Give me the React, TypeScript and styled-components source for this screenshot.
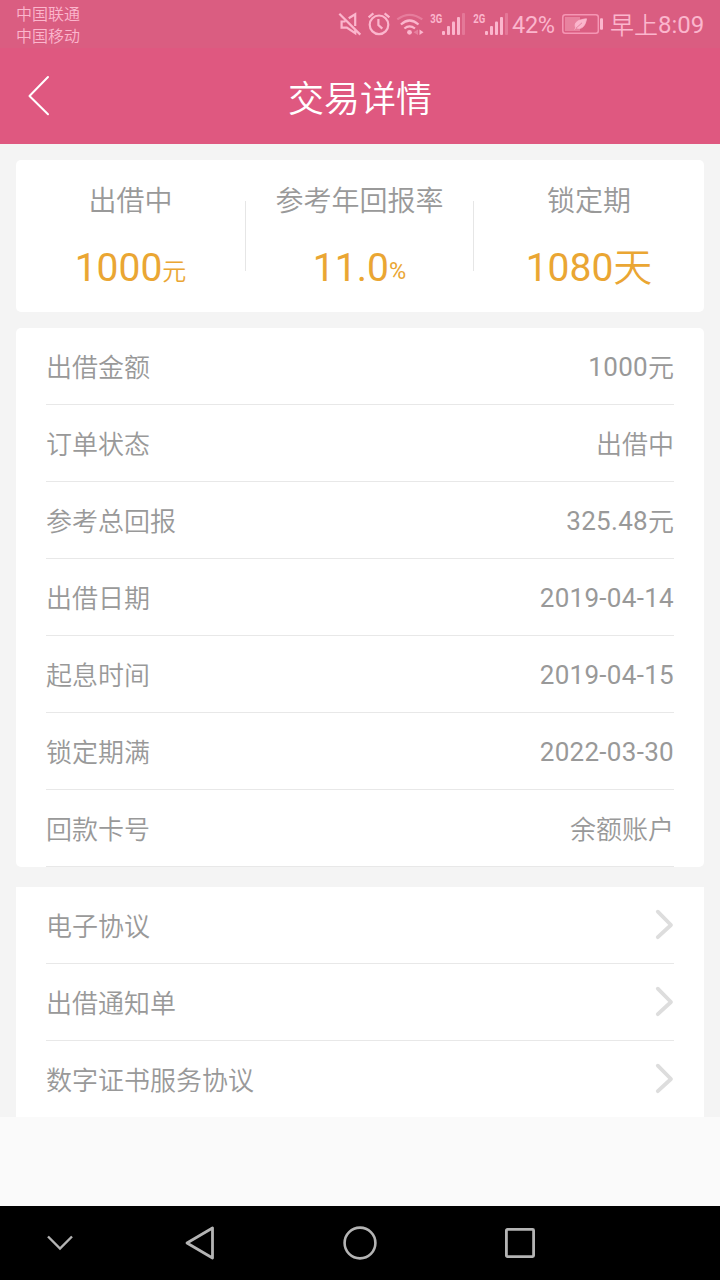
import React from "react";
import styled, { createGlobalStyle } from "styled-components";

const GlobalStyle = createGlobalStyle`
  * { box-sizing: border-box; }
  body {
    margin: 0;
    background: #fafafa;
    font-family: Roboto, "Noto Sans CJK SC", sans-serif;
    font-weight: 350;
    -webkit-font-smoothing: antialiased;
  }
  svg { display: block; flex: none; }
`;

const Screen = styled.div`
  width: 720px;
  height: 1280px;
  display: flex;
  flex-direction: column;
  background: #fafafa;
  overflow: hidden;
`;

const StatusBar = styled.div`
  height: 48px;
  flex: none;
  display: flex;
  justify-content: space-between;
  padding: 0 16px;
  background: #da5d81;
  color: #fbb6cd;
`;

const Carriers = styled.div`
  padding-top: 4px;
  font-size: 16px;
  line-height: 22px;
`;

const StatusItems = styled.div`
  display: flex;
  align-items: center;
`;

const StatusText = styled.span<{ $width: number; $size: number; $pull?: number }>`
  width: ${(p) => p.$width}px;
  margin-left: ${(p) => -(p.$pull ?? 0)}px;
  font-size: ${(p) => p.$size}px;
  line-height: 48px;
  white-space: nowrap;
  padding-top: 1px;
`;

const Header = styled.header`
  height: 96px;
  flex: none;
  display: grid;
  grid-template-columns: 80px 1fr 80px;
  align-items: center;
  background: #df5880;
  color: #fff;
`;

const Title = styled.h1`
  margin: 0;
  padding-top: 7px;
  font-size: 36px;
  line-height: 50px;
  font-weight: 350;
  text-align: center;
`;

const Content = styled.main`
  flex: none;
  display: flex;
  flex-direction: column;
  padding: 16px 16px 0;
  background: #f4f4f4;
`;

const Summary = styled.section`
  height: 152px;
  display: flex;
  margin-bottom: 16px;
  border-radius: 5px;
  background: #fff;
`;

const SummaryCell = styled.div<{ $width: number }>`
  width: ${(p) => p.$width}px;
  display: flex;
  flex-direction: column;
  align-items: center;
  padding-top: 22px;
`;

const Divider = styled.div`
  width: 1px;
  height: 70px;
  margin-top: 41px;
  background: #e6e6e6;
`;

const SummaryLabel = styled.div`
  font-size: 28px;
  line-height: 40px;
  color: #999;
`;

const SummaryValue = styled.div`
  height: 60px;
  margin-top: 16px;
  font-size: 39px;
  line-height: 60px;
  color: #eaa633;
  white-space: nowrap;
`;

const Digits = styled.span<{ $spacing?: number }>`
  font-weight: 400;
  letter-spacing: ${(p) => p.$spacing ?? 0}px;
`;

const Unit = styled.span<{ $size: number; $weight?: number; $raise?: number }>`
  font-size: ${(p) => p.$size}px;
  font-weight: ${(p) => p.$weight ?? 350};
  line-height: 1;
  vertical-align: ${(p) => p.$raise ?? 0}px;
`;

const List = styled.section<{ $radius?: number }>`
  padding: 0 30px;
  border-radius: ${(p) => p.$radius ?? 0}px;
  background: #fff;

  & + & { margin-top: 20px; }
`;

const Row = styled.div<{ $last?: boolean }>`
  height: ${(p) => (p.$last ? 76 : 77)}px;
  display: flex;
  align-items: center;
  justify-content: space-between;
  border-bottom: ${(p) => (p.$last ? "none" : "1px solid #e8e8e8")};
  font-size: 26px;
  line-height: 38px;
  color: #999;
`;

const RowText = styled.span`
  padding-top: 4px;
`;

const RowValue = styled.span`
  padding-top: 1px;
`;

const NavBar = styled.nav`
  height: 74px;
  flex: none;
  margin-top: auto;
  display: grid;
  grid-template-columns: 120px 160px 160px 160px 120px;
  place-items: center;
  background: #000;
`;

function SignalIcon({ label }: { label: string }) {
  return (
    <svg width="43" height="48" viewBox="428 0 43 48" fill="#fbb6cd">
      <text x="430.3" y="22.6" fontSize="12.5" fontWeight="700" textLength="12" lengthAdjust="spacingAndGlyphs">
        {label}
      </text>
      <rect x="442" y="31" width="3" height="4" rx="1" />
      <rect x="447" y="26" width="3" height="9" rx="1" />
      <rect x="452" y="21.5" width="3" height="13.5" rx="1" />
      <rect x="457" y="17" width="3" height="18" rx="1" />
      <rect x="462" y="13" width="3" height="22" rx="1" opacity="0.3" />
    </svg>
  );
}

function StatusIcons() {
  return (
    <>
      <svg width="92" height="48" viewBox="336 0 92 48" fill="none" stroke="#fbb6cd" strokeWidth="2.2">
        <path d="M339.3 13.7L360.3 34.6M348.7 18.2L355.2 14.3V26M345.5 21.5H341.6V27.6H346.8L355.2 33.2V30" />
        <circle cx="379" cy="24.8" r="9.3" />
        <path d="M378.4 19V25L382.3 28.6M368.6 17.4L373.4 13.4M389.4 17.4L384.6 13.4" />
        <path d="M397.3 19.4Q409.5 10.2 422.3 19.4" opacity="0.35" />
        <path d="M400.9 24.5Q409.5 16.5 418.5 24.5M404.4 28.5Q409.5 24.3 415 28.5" />
        <circle cx="409.5" cy="32.3" r="2.4" fill="#fbb6cd" stroke="none" />
        <path d="M418 29.5V35L413.5 32.2Z" fill="#fbb6cd" stroke="none" opacity="0.4" />
        <path d="M419.5 29.5V35L423.5 32.2Z" fill="#fbb6cd" stroke="none" />
      </svg>
      <SignalIcon label="3G" />
      <SignalIcon label="2G" />
    </>
  );
}

function BatteryIcon() {
  return (
    <svg width="50" height="48" viewBox="560 0 50 48">
      <rect x="562.8" y="14.8" width="35.5" height="18.4" rx="2.5" fill="none" stroke="#f596b4" strokeWidth="1.5" />
      <rect x="565" y="17" width="15" height="14" fill="#e8829f" />
      <path d="M574.5 29.5L577 26.5M575.5 27.5C573.5 22 579 19.5 586.5 18.8C585.5 25.5 582 30.5 575.5 27.5Z" fill="#fbb6cd" stroke="#fbb6cd" strokeWidth="0.8" />
      <path d="M576 28.2L582 22.8" stroke="#de7596" strokeWidth="0.8" />
      <rect x="600" y="18.3" width="3" height="11.4" rx="1" fill="#fbb6cd" />
    </svg>
  );
}

function Chevron() {
  return (
    <svg width="20" height="32" viewBox="0 0 20 32" fill="none" stroke="#ddd" strokeWidth="3.8" strokeLinecap="round" strokeLinejoin="round">
      <path d="M3.8 2.7L17 16L3.8 28.2" />
    </svg>
  );
}

const details: { label: string; digits?: string; text?: string }[] = [
  { label: "出借金额", digits: "1000", text: "元" },
  { label: "订单状态", text: "出借中" },
  { label: "参考总回报", digits: "325.48", text: "元" },
  { label: "出借日期", digits: "2019-04-14" },
  { label: "起息时间", digits: "2019-04-15" },
  { label: "锁定期满", digits: "2022-03-30" },
  { label: "回款卡号", text: "余额账户" },
];

const links = ["电子协议", "出借通知单", "数字证书服务协议"];

export default function App() {
  return (
    <>
      <GlobalStyle />
      <Screen>
        <StatusBar>
          <Carriers>
            <div>中国联通</div>
            <div>中国移动</div>
          </Carriers>
          <StatusItems>
            <StatusIcons />
            <StatusText $width={48} $size={23.5} $pull={2}>
              <Digits $spacing={-0.3}>42%</Digits>
            </StatusText>
            <BatteryIcon />
            <StatusText $width={94} $size={24}>
              <Unit $size={24} $raise={-1}>早上</Unit>
              <Digits>8:09</Digits>
            </StatusText>
          </StatusItems>
        </StatusBar>
        <Header>
          <svg width="80" height="96" viewBox="0 48 80 96" fill="none" stroke="#fff" strokeWidth="2" strokeLinecap="round" strokeLinejoin="round">
            <path d="M48 77L29.5 96L48 114.3" />
          </svg>
          <Title>交易详情</Title>
        </Header>
        <Content>
          <Summary>
            <SummaryCell $width={229}>
              <SummaryLabel>出借中</SummaryLabel>
              <SummaryValue><Digits>1000</Digits><Unit $size={24} $raise={1}>元</Unit></SummaryValue>
            </SummaryCell>
            <Divider />
            <SummaryCell $width={227}>
              <SummaryLabel>参考年回报率</SummaryLabel>
              <SummaryValue><Digits>11.0</Digits><Unit $size={23.5} $weight={400} $raise={2}>%</Unit></SummaryValue>
            </SummaryCell>
            <Divider />
            <SummaryCell $width={230}>
              <SummaryLabel>锁定期</SummaryLabel>
              <SummaryValue><Digits>1080</Digits><Unit $size={39}>天</Unit></SummaryValue>
            </SummaryCell>
          </Summary>
          <List $radius={5}>
            {details.map((d) => (
              <Row key={d.label}>
                <RowText>{d.label}</RowText>
                {d.digits ? (
                  <RowValue>
                    <Digits $spacing={0.3}>{d.digits}</Digits>
                    {d.text && <Unit $size={26} $raise={-1}>{d.text}</Unit>}
                  </RowValue>
                ) : (
                  <RowText>{d.text}</RowText>
                )}
              </Row>
            ))}
          </List>
          <List>
            {links.map((label, i) => (
              <Row key={label} $last={i === links.length - 1}>
                <RowText>{label}</RowText>
                <Chevron />
              </Row>
            ))}
          </List>
        </Content>
        <NavBar>
          <svg width="30" height="20" viewBox="45 1233 30 20" fill="none" stroke="#b4b4b4" strokeWidth="2.4">
            <path d="M48 1236.5L60 1248.5L72 1236.5" />
          </svg>
          <svg width="36" height="40" viewBox="182 1223 36 40" fill="none" stroke="#b4b4b4" strokeWidth="2.8" strokeLinejoin="round">
            <path d="M212.5 1228V1258L187 1243Z" />
          </svg>
          <svg width="36" height="36" viewBox="0 0 36 36" fill="none" stroke="#b4b4b4" strokeWidth="2.6">
            <circle cx="18" cy="18" r="15.4" />
          </svg>
          <svg width="32" height="32" viewBox="0 0 32 32" fill="none" stroke="#b4b4b4" strokeWidth="2.8">
            <rect x="2.4" y="2.4" width="27.2" height="27.2" rx="1" />
          </svg>
        </NavBar>
      </Screen>
    </>
  );
}
